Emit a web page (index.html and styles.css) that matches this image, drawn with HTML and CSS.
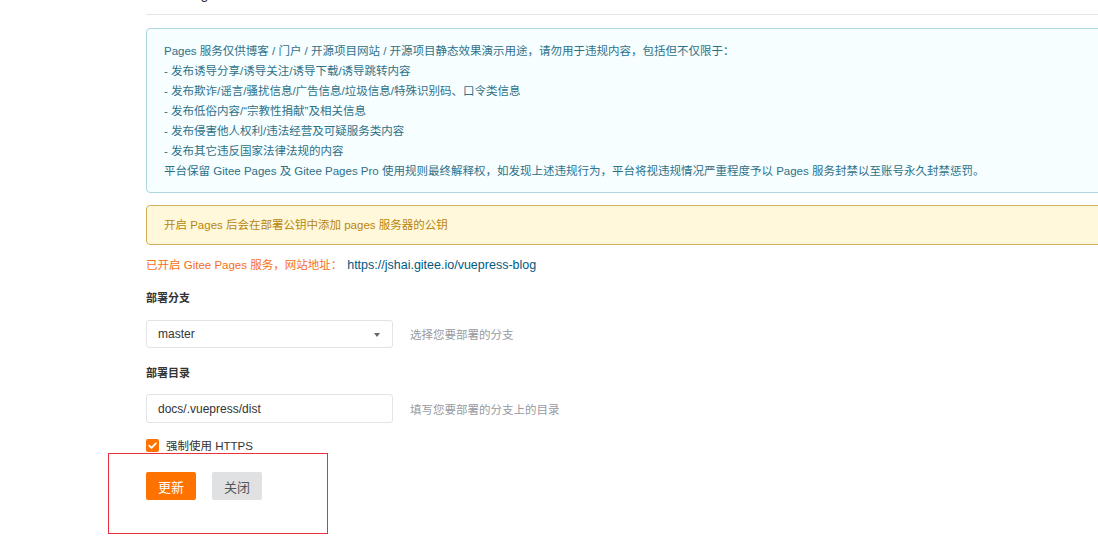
FILE: index.html
```html
<!DOCTYPE html>
<html lang="zh-CN">
<head>
<meta charset="utf-8">
<title>Gitee Pages</title>
<link rel="stylesheet" href="styles.css">
</head>
<body>
<div class="page">
  <div class="title">Gitee Pages</div>

  <div class="msg info">
    <div>Pages 服务仅供博客 / 门户 / 开源项目网站 / 开源项目静态效果演示用途，请勿用于违规内容，包括但不仅限于：</div>
    <div>- 发布诱导分享/诱导关注/诱导下载/诱导跳转内容</div>
    <div>- 发布欺诈/谣言/骚扰信息/广告信息/垃圾信息/特殊识别码、口令类信息</div>
    <div>- 发布低俗内容/“宗教性捐献”及相关信息</div>
    <div>- 发布侵害他人权利/违法经营及可疑服务类内容</div>
    <div>- 发布其它违反国家法律法规的内容</div>
    <div>平台保留 Gitee Pages 及 Gitee Pages Pro 使用规则最终解释权，如发现上述违规行为，平台将视违规情况严重程度予以 Pages 服务封禁以至账号永久封禁惩罚。</div>
  </div>

  <div class="msg warning">开启 Pages 后会在部署公钥中添加 pages 服务器的公钥</div>

  <div class="status"><span class="status-label">已开启 Gitee Pages 服务，网站地址：</span><a class="site-link" href="#">https://jshai.gitee.io/vuepress-blog</a></div>

  <div class="field-label first">部署分支</div>
  <div class="field-row">
    <div class="control select">
      <span>master</span>
      <svg class="caret" width="6" height="4" viewBox="0 0 6 4"><path d="M0 0H6L3 4Z" fill="#666"/></svg>
    </div>
    <span class="hint">选择您要部署的分支</span>
  </div>

  <div class="field-label second">部署目录</div>
  <div class="field-row dir">
    <div class="control input">docs/.vuepress/dist</div>
    <span class="hint">填写您要部署的分支上的目录</span>
  </div>

  <div class="check-row">
    <span class="checkbox">
      <svg width="13" height="13" viewBox="0 0 13 13"><path d="M3.2 6.6L5.5 8.8L9.9 4.3" fill="none" stroke="#fff" stroke-width="1.8" stroke-linecap="round" stroke-linejoin="round"/></svg>
    </span>
    <span class="check-label">强制使用 HTTPS</span>
  </div>

  <div class="actions">
    <button class="btn primary">更新</button>
    <button class="btn plain">关闭</button>
  </div>
</div>
<div class="highlight"></div>
</body>
</html>
```

FILE: styles.css
```css
html, body {
  margin: 0;
  padding: 0;
  background: #ffffff;
  overflow: hidden;
}
body {
  width: 1098px;
  height: 558px;
  position: relative;
  font-family: "Liberation Sans", "Noto Sans CJK SC", sans-serif;
  color: #333;
}
.page {
  margin-left: 146px;
  width: 1060px;
}
.title {
  margin-top: -16px;
  line-height: 20px;
  font-size: 14px;
  color: #333;
  padding-bottom: 10px;
  border-bottom: 1px solid #e4e4e4;
}
.msg {
  border-radius: 4px;
  box-sizing: border-box;
}
.info {
  margin-top: 13px;
  background: #f6feff;
  border: 1px solid #aed7df;
  color: #2f7189;
  font-size: 11.5px;
  line-height: 20px;
  padding: 12px 17px 11px;
}
.warning {
  margin-top: 12px;
  background: #fff8db;
  border: 1px solid #d3b15c;
  color: #b8860b;
  font-size: 11.5px;
  line-height: 20px;
  padding: 9px 17px;
}
.status {
  margin-top: 10px;
  line-height: 20px;
  display: flex;
  align-items: baseline;
}
.status-label {
  color: #f56f1a;
  font-size: 11.5px;
}
.site-link {
  color: #005980;
  text-decoration: none;
  font-size: 12.5px;
  margin-left: 5px;
}
.field-label {
  font-size: 11px;
  font-weight: bold;
  line-height: 20px;
  color: #333;
}
.field-label.first {
  margin-top: 13px;
}
.field-label.second {
  margin-top: 15px;
}
.field-row {
  display: flex;
  align-items: center;
  gap: 17px;
  margin-top: 12px;
}
.field-row.dir {
  margin-top: 11px;
}
.control {
  width: 247px;
  height: 28px;
  box-sizing: border-box;
  border: 1px solid #e2e3e8;
  border-radius: 3px;
  padding: 0 11px;
  font-size: 12px;
  color: #333;
  display: flex;
  align-items: center;
  background: #fff;
}
.control.input {
  height: 29px;
}
.select {
  justify-content: space-between;
}
.caret {
  margin-right: 1px;
  margin-top: 1px;
}
.hint {
  font-size: 11.5px;
  color: #979aa3;
}
.check-row {
  display: flex;
  align-items: center;
  gap: 7px;
  margin-top: 13px;
  line-height: 20px;
}
.checkbox {
  width: 13px;
  height: 13px;
  border-radius: 2px;
  background: #fe7300;
  display: flex;
  margin-top: -1px;
}
.check-label {
  font-size: 11.5px;
  color: #333;
}
.actions {
  display: flex;
  gap: 16px;
  margin-top: 16px;
}
.btn {
  width: 50px;
  height: 28px;
  border: none;
  border-radius: 2px;
  font-family: "Liberation Sans", "Noto Sans CJK SC", sans-serif;
  font-size: 13px;
  padding: 0;
  cursor: pointer;
}
.btn.primary {
  background: #fe7300;
  color: #fff;
}
.btn.plain {
  background: #e0e1e2;
  color: #555;
}
.highlight {
  position: absolute;
  left: 108px;
  top: 453px;
  width: 220px;
  height: 81px;
  box-sizing: border-box;
  border: 1px solid #ea2f3e;
}
```
